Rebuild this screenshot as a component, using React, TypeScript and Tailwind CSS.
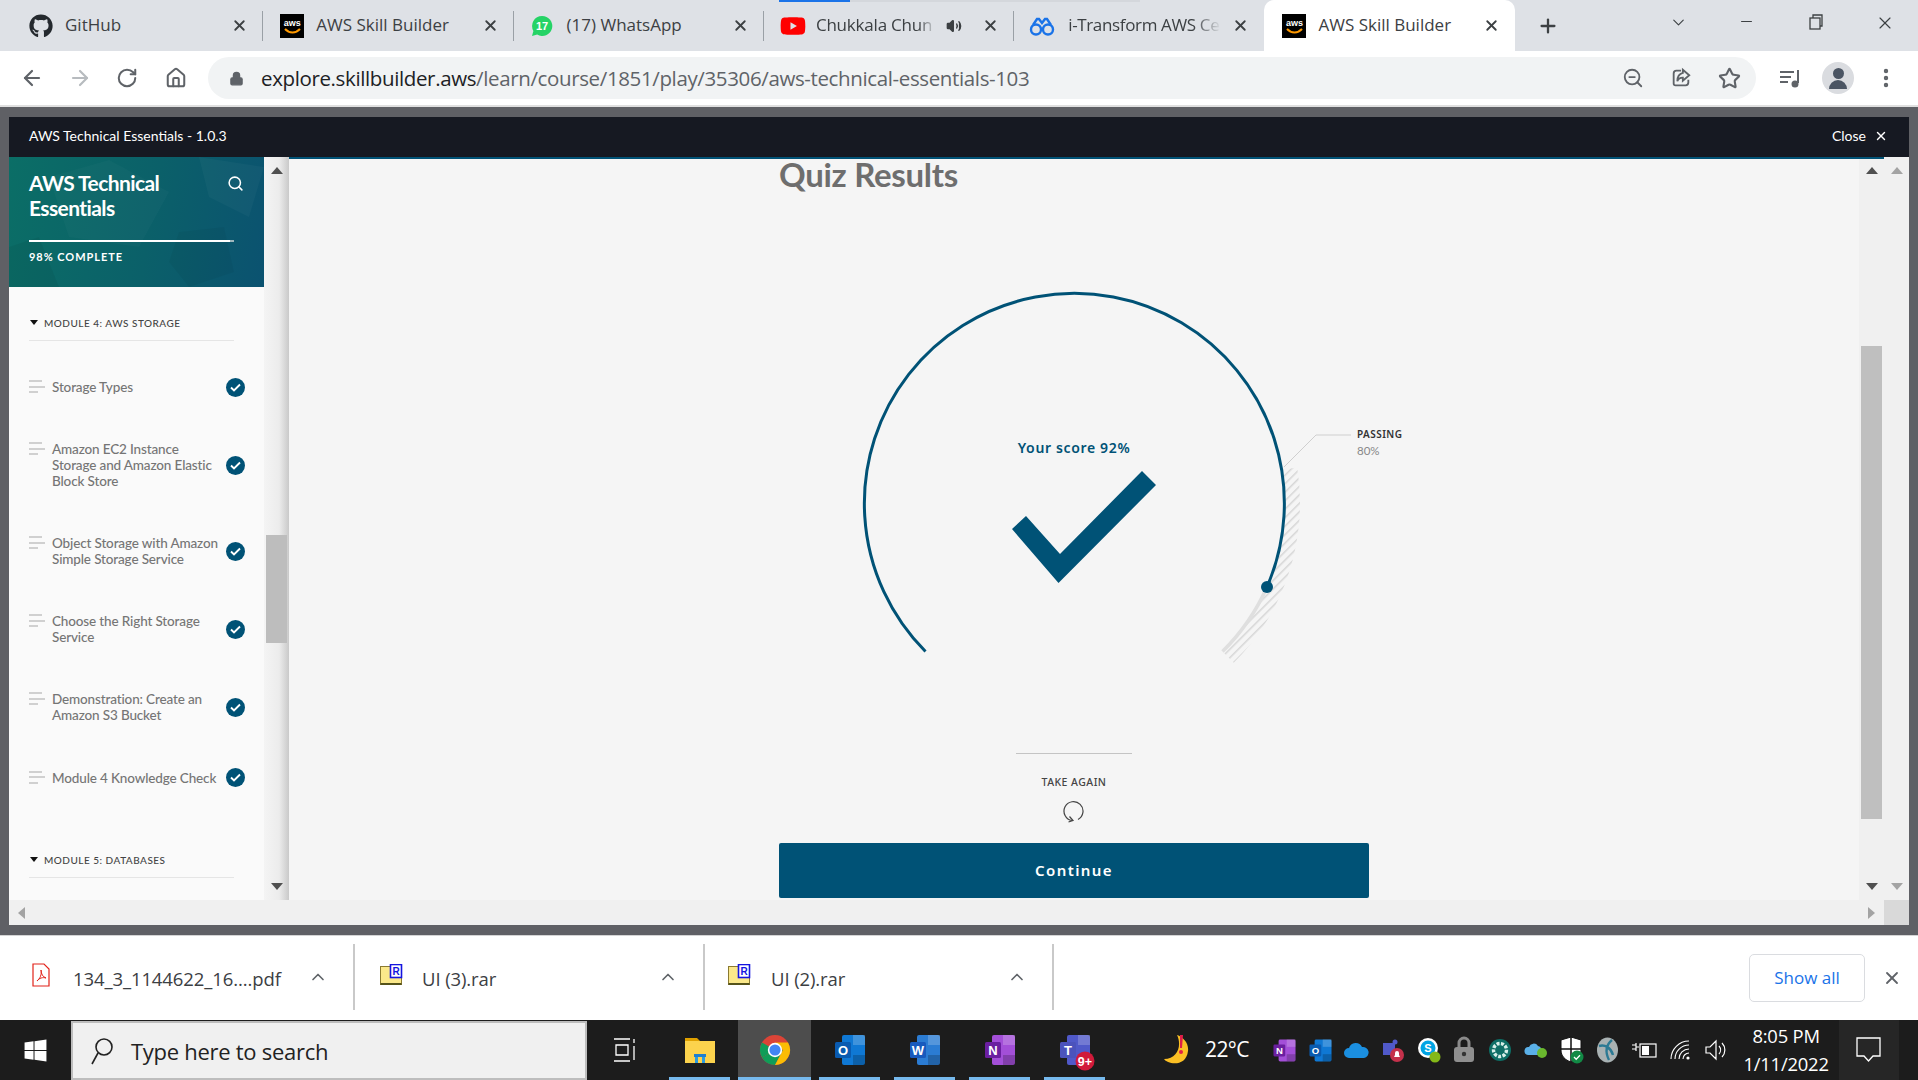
import { ArrowLeft, ArrowRight, ChevronDown, ChevronUp, Home, Lock, Minus, MoreVertical, Plus, RotateCw, Search, Star, Volume2, X, ZoomOut } from "lucide-react";
import { FaGithub, FaWindows, FaYoutube } from "react-icons/fa";
import type { ReactNode } from "react";

const uiFont = "font-['Open_Sans','Noto_Sans',sans-serif]";

function AwsIcon() {
    return (
        <span className="w-6 h-6 bg-black flex flex-col items-center justify-center shrink-0">
            <span className="text-white text-[9px] leading-[10px] font-bold font-['Liberation_Sans',sans-serif]">aws</span>
            <svg width="17" height="6" viewBox="0 0 17 6"><path d="M1 1c4 4.5 11 4.5 15 0" stroke="#f90" strokeWidth="2" fill="none" /></svg>
        </span>
    );
}

function WhatsappIcon() {
    return (
        <svg width="24" height="24" viewBox="0 0 24 24" className="shrink-0">
            <path d="M12 2a10 10 0 0 0-8.6 15L2 22l5.2-1.4A10 10 0 1 0 12 2z" fill="#25d366" />
            <text x="12" y="16" textAnchor="middle" className="font-['Liberation_Sans',sans-serif] text-[11px] font-bold fill-white">17</text>
        </svg>
    );
}

function GlassesIcon() {
    return (
        <svg width="26" height="24" viewBox="0 0 26 24" fill="none" stroke="#1a73e8" strokeWidth="2.4" className="shrink-0">
            <circle cx="7" cy="15.5" r="5" />
            <circle cx="19" cy="15.5" r="5" />
            <path d="M12 15h2M4 11l4-6h2l3 4 3-4h2l4 6" />
        </svg>
    );
}

interface tabType {
    title: string,
    icon: ReactNode,
    iconBox: string,
    fade?: boolean,
    audio?: boolean,
    active?: boolean,
}

const tabs: tabType[] = [
    {title: 'GitHub', icon: <FaGithub size={24} color="#24292e" />, iconBox: 'ml-[16px] mr-[12px]'},
    {title: 'AWS Skill Builder', icon: <AwsIcon />, iconBox: 'ml-[17px] mr-[12px]'},
    {title: '(17) WhatsApp', icon: <WhatsappIcon />, iconBox: 'ml-[16px] mr-[13px]'},
    {title: 'Chukkala Chun', icon: <FaYoutube size={26} color="#f00" />, iconBox: 'ml-[16px] mr-[10px]', fade: true, audio: true},
    {title: 'i-Transform AWS Ce', icon: <GlassesIcon />, iconBox: 'ml-[15px] mr-[13px]', fade: true},
    {title: 'AWS Skill Builder', icon: <AwsIcon />, iconBox: 'ml-[18px] mr-[12px]', active: true},
];

function TabStrip() {
    return (
        <div className="relative h-[51px] bg-[#dee1e6] flex items-stretch pl-[13px] shrink-0">
            {/* page loading bar on the youtube tab */}
            <div className="absolute left-[779px] top-0 h-[2px] w-[71px] bg-[#1a73e8]" />
            <div className="absolute left-[850px] top-0 h-[2px] w-[290px] bg-[#d4d7dc]" />
            {tabs.map((tab, i) => (
                <div key={i} className={`w-[250.3px] flex items-center relative ${tab.active ? 'bg-white rounded-t-[10px] mt-0' : ''}`}>
                    <span className={`${tab.iconBox} shrink-0 flex`}>{tab.icon}</span>
                    <span className={`${uiFont} text-[17px] -mt-[1px] text-[#3c4043] whitespace-nowrap ${tab.fade ? (tab.audio ? 'w-[120px] tracking-[-0.2px] [mask-image:linear-gradient(90deg,#000_85%,transparent)]' : 'w-[153px] tracking-[-0.35px] [mask-image:linear-gradient(90deg,#000_82%,transparent)]') : 'w-[150px]'}`}>{tab.title}</span>
                    {tab.audio && <Volume2 size={16} fill="#3c4043" color="#3c4043" className="ml-[10px]" />}
                    <X size={17} strokeWidth={2.6} color="#3c4043" className="absolute right-[15px] top-[17px]" />
                    {i < 4 && <span className="absolute right-0 top-[11px] h-[30px] w-px bg-[#9aa0a6]" />}
                </div>
            ))}
            <Plus size={22} strokeWidth={2.5} color="#3c4043" className="ml-[22px] mt-[15px]" />
            <div className="flex-1" />
            <div className="flex items-start pt-[13px] text-[#3c4043]">
                <ChevronDown size={19} strokeWidth={1.4} className="mr-[50px]" />
                <Minus size={17} strokeWidth={1.5} className="mr-[52px]" />
                <svg width="18" height="18" viewBox="0 0 18 18" fill="none" stroke="#3c4043" strokeWidth="1.3" className="mr-[50px]">
                    <rect x="3" y="5" width="10" height="11" />
                    <path d="M6 5V2h9v11h-2" />
                </svg>
                <X size={20} strokeWidth={1.4} className="mr-[23px]" />
            </div>
        </div>
    );
}

function Toolbar() {
    return (
        <div className="h-[54px] bg-white flex items-center shrink-0 border-b-0">
            <div className="w-[208px] flex items-center text-[#5f6368]">
                <ArrowLeft size={24} strokeWidth={2.2} className="ml-[20px]" />
                <ArrowRight size={24} strokeWidth={2.2} color="#b7bbbf" className="ml-[24px]" />
                <RotateCw size={22} strokeWidth={2.2} className="ml-[24px]" />
                <Home size={22} strokeWidth={2.2} className="ml-[27px]" />
            </div>
            <div className="w-[1548px] h-[42px] bg-[#f1f3f4] rounded-full flex items-center">
                <Lock size={15} fill="#5f6368" color="#5f6368" className="ml-[21px]" />
                <span className={`${uiFont} ml-[17px] text-[20.5px] tracking-[-0.37px] text-[#5f6368] whitespace-nowrap`}><span className="text-[#202124]">explore.skillbuilder.aws</span>/learn/course/1851/play/35306/aws-technical-essentials-103</span>
                <div className="flex-1" />
                <ZoomOut size={22} color="#5f6368" />
                <svg width="22" height="22" viewBox="0 0 24 24" fill="none" stroke="#5f6368" strokeWidth="2" className="ml-[26px]">
                    <path d="M12 4H7a3 3 0 0 0-3 3v11a2 2 0 0 0 2 2h11a3 3 0 0 0 3-3v-3" />
                    <path d="M14 3l7 6-7 6v-3.5c-3 0-5 1-6 4 0-5 2-8 6-9z" />
                </svg>
                <Star size={23} strokeWidth={2.2} color="#5f6368" className="ml-[26px] mr-[15px]" />
            </div>
            <svg width="24" height="24" viewBox="0 0 24 24" fill="none" stroke="#5f6368" strokeWidth="2" className="ml-[22px]">
                <path d="M2 6h14M2 11h11M2 16h8" />
                <path d="M20 4v13" />
                <circle cx="17" cy="18" r="2.5" fill="#5f6368" />
            </svg>
            <div className="ml-[20px] w-[32px] h-[32px] rounded-full bg-[#dadce0] flex flex-col items-center justify-center">
                <span className="w-[11px] h-[11px] rounded-full bg-[#4b5563]" />
                <span className="w-[18px] h-[9px] rounded-t-full bg-[#4b5563] mt-[1px]" />
            </div>
            <MoreVertical size={24} color="#5f6368" strokeWidth={2.4} className="ml-[20px]" />
        </div>
    );
}

function Tri(props: {dir: 'up' | 'down' | 'left' | 'right', color: string}) {
    const points = {up: '0,7 12,7 6,0', down: '0,0 12,0 6,7', left: '7,0 7,12 0,6', right: '0,0 0,12 7,6'}[props.dir];
    const wide = props.dir === 'up' || props.dir === 'down';
    return (
        <svg width={wide ? 12 : 7} height={wide ? 7 : 12} viewBox={wide ? "0 0 12 7" : "0 0 7 12"}>
            <polygon points={points} fill={props.color} />
        </svg>
    );
}

function CheckBadge() {
    return (
        <span className="w-[19px] h-[19px] rounded-full bg-[#005276] flex items-center justify-center shrink-0">
            <svg width="11" height="9" viewBox="0 0 11 9" fill="none" stroke="white" strokeWidth="1.9"><path d="M1 4.5l3 3 6-6" /></svg>
        </span>
    );
}

const lessons = [
    {lines: ['Storage Types'], height: 'h-[16px] mt-[38px]'},
    {lines: ['Amazon EC2 Instance', 'Storage and Amazon Elastic', 'Block Store'], height: 'mt-[46px]'},
    {lines: ['Object Storage with Amazon', 'Simple Storage Service'], height: 'mt-[46px]'},
    {lines: ['Choose the Right Storage', 'Service'], height: 'mt-[46px]'},
    {lines: ['Demonstration: Create an', 'Amazon S3 Bucket'], height: 'mt-[46px]'},
    {lines: ['Module 4 Knowledge Check'], height: 'mt-[45px]'},
];

function ModuleHeader(props: {title: string, className: string}) {
    return (
        <div className={`${props.className} ml-[20px] w-[205px] h-[24px] border-b border-[#e5e5e5] flex items-start`}>
            <span className="ml-[1px] mt-[3px]"><svg width="8" height="5" viewBox="0 0 8 5"><polygon points="0,0 8,0 4,5" fill="#111" /></svg></span>
            <span className="ml-[6px] text-[10px] leading-[12px] tracking-[0.5px] text-[#444] font-medium whitespace-nowrap">{props.title}</span>
        </div>
    );
}

function Sidebar() {
    return (
        <div className="w-[255px] h-full bg-[#fafafa] overflow-hidden font-['Lato',sans-serif] shrink-0">
            <div className="relative h-[130px] overflow-hidden bg-[linear-gradient(100deg,#0b6e66,#0b6069_55%,#0b5270)]">
                <svg width="255" height="130" viewBox="0 0 255 130" className="absolute inset-0">
                    <polygon points="40,20 100,3 160,35 130,90 60,80" fill="#fff" opacity="0.025" />
                    <polygon points="190,0 255,10 240,60 200,40" fill="#fff" opacity="0.03" />
                    <polygon points="170,75 215,70 225,115 180,130 160,105" fill="#000" opacity="0.04" />
                    <polygon points="0,90 30,80 50,130 0,130" fill="#000" opacity="0.05" />
                </svg>
                <div className="relative pl-[20px] pt-[13px] flex justify-between">
                    <h1 className="text-white font-bold text-[21px] leading-[25px] tracking-[-0.6px] w-[170px]">AWS Technical Essentials</h1>
                    <Search size={17} color="white" strokeWidth={2.2} className="mr-[20px] mt-[5px]" />
                </div>
                <div className="relative ml-[20px] mt-[20px] w-[205px] h-[2px] bg-[#9fb7bd]"><div className="w-[98%] h-full bg-white" /></div>
                <p className="relative ml-[20px] mt-[9px] text-white font-bold text-[11px] leading-[12px] tracking-[0.95px]">98% COMPLETE</p>
            </div>
            <ModuleHeader title="MODULE 4: AWS STORAGE" className="mt-[30px]" />
            {lessons.map((lesson, i) => (
                <div key={i} className={`${lesson.height} flex items-center pl-[20px]`}>
                    <div className="flex-1 flex items-start">
                        <span className="w-[16px] mt-[1px] flex flex-col gap-[3.5px] shrink-0">
                            <span className="block h-[2px] w-[13px] bg-[#d0d0d0]" />
                            <span className="block h-[2px] w-[16px] bg-[#d0d0d0]" />
                            <span className="block h-[2px] w-[9px] bg-[#d0d0d0]" />
                        </span>
                        <p className="ml-[7px] text-[13.5px] leading-[16px] tracking-[-0.14px] text-[#757575] font-medium whitespace-nowrap">
                            {lesson.lines.map(line => <span key={line} className="block">{line}</span>)}
                        </p>
                    </div>
                    <span className="mr-[19px]"><CheckBadge /></span>
                </div>
            ))}
            <ModuleHeader title="MODULE 5: DATABASES" className="mt-[67px]" />
        </div>
    );
}

function SidebarScroll() {
    return (
        <div className="relative w-[25px] h-full shrink-0 bg-[linear-gradient(90deg,#f4f4f4,#ececec_60%,#c9c9c9)] flex flex-col items-center">
            <span className="mt-[10px]"><Tri dir="up" color="#505050" /></span>
            <div className="mt-[361px] w-[21px] h-[108px] bg-[#bdbdbd]" />
            <div className="flex-1" />
            <span className="mb-[10px]"><Tri dir="down" color="#505050" /></span>
        </div>
    );
}

function Gauge() {
    return (
        <svg width="700" height="400" viewBox="0 0 700 400" className="-mx-[55px] mt-[87px] block shrink-0">
            <defs>
                <pattern id="hatch" width="6" height="6" patternUnits="userSpaceOnUse" patternTransform="rotate(-45)">
                    <rect x="0" y="0" width="6" height="1.5" fill="#d6d6d6" />
                </pattern>
            </defs>
            <path d="M557.4 190.1A210 210 0 0 1 498.5 371.5L509.8 382.8A226 226 0 0 0 573.2 187.6Z" fill="url(#hatch)" />
            <path d="M543 307A210 210 0 0 1 498.5 371.5" fill="none" stroke="#dfdfdf" strokeWidth="3.5" />
            <path d="M201.5 371.5A210 210 0 1 1 543 307" fill="none" stroke="#005276" strokeWidth="3" />
            <circle cx="543" cy="307" r="6" fill="#005276" />
            <polygon points="288,249 302,236 336,274 418,191 432,205 334.5,303" fill="#005276" />
            <path d="M560 187L592 155H627" fill="none" stroke="#cfcfcf" strokeWidth="1" />
            <text x="633" y="158" className="font-['Noto_Sans',sans-serif] text-[10px] font-semibold tracking-[0.45px] fill-[#333]">PASSING</text>
            <text x="633" y="175" className="font-['Lato',sans-serif] text-[11.5px] fill-[#888]">80%</text>
            <text x="350" y="173" textAnchor="middle" className="font-['Noto_Sans',sans-serif] text-[14px] font-semibold tracking-[0.65px] fill-[#005276]">Your score 92%</text>
        </svg>
    );
}

function Results() {
    return (
        <div className="flex-1 h-full bg-[#f5f5f5] flex flex-col items-center">
            <div className="w-[590px] flex flex-col items-center">
                <h2 className="w-full h-[36px] text-[33px] leading-[34px] font-bold text-[#6e6e6e] font-['Lato',sans-serif] tracking-[-0.3px]">Quiz Results</h2>
                <Gauge />
                <div className="mt-[73px] w-[116px] h-px bg-[#c4c4c4]" />
                <p className="mt-[21px] text-[10.5px] leading-[14px] font-medium tracking-[0.45px] text-[#444] font-['Noto_Sans',sans-serif]">TAKE AGAIN</p>
                <svg width="22" height="24" viewBox="0 0 22 24" fill="none" stroke="#444" strokeWidth="1.2" className="mt-[10px]">
                    <path d="M9 21.5A9.5 9.5 0 1 1 15 20.5" />
                    <path d="M6.5 17.5l3.5 4-4.5 1.5" />
                </svg>
                <button className="mt-[20px] w-full h-[55px] bg-[#005276] rounded-[2px] text-white text-[15px] font-semibold tracking-[1.4px] font-['Noto_Sans',sans-serif]">Continue</button>
            </div>
        </div>
    );
}

function RightScrolls() {
    return (
        <>
            <div className="w-[25px] h-full bg-[#f0f0f0] flex flex-col items-center shrink-0">
                <span className="mt-[10px]"><Tri dir="up" color="#505050" /></span>
                <div className="mt-[172px] w-[21px] h-[473px] bg-[#bfbfbf]" />
                <div className="flex-1" />
                <span className="mb-[10px]"><Tri dir="down" color="#505050" /></span>
            </div>
            <div className="w-[25px] h-full bg-[#f0f0f0] flex flex-col items-center justify-between shrink-0">
                <span className="mt-[10px]"><Tri dir="up" color="#a3a3a3" /></span>
                <span className="mb-[10px]"><Tri dir="down" color="#a3a3a3" /></span>
            </div>
        </>
    );
}

function Modal() {
    return (
        <div className="h-[828px] bg-[#5f6065] px-[9px] py-[10px] shrink-0">
            <div className="h-[808px] flex flex-col">
                <div className="h-[40px] pb-[3px] bg-[#161922] flex items-center justify-between text-white font-['Lato',sans-serif] text-[14px] shrink-0">
                    <span className="ml-[20px]">AWS Technical Essentials - 1.0.3</span>
                    <span className="flex items-center mr-[21px]">Close<X size={14} strokeWidth={2.4} className="ml-[8px]" /></span>
                </div>
                <div className="h-[743px] flex shrink-0 relative">
                    <Sidebar />
                    <SidebarScroll />
                    <Results />
                    <RightScrolls />
                    <div className="absolute left-[280px] right-[25px] top-0 h-[2px] bg-[#005276]" />
                </div>
                <div className="h-[25px] bg-[#f0f0f0] flex items-center justify-between shrink-0">
                    <span className="ml-[9px] flex"><Tri dir="left" color="#a3a3a3" /></span>
                    <div className="flex items-center h-full">
                        <Tri dir="right" color="#a3a3a3" />
                        <div className="ml-[9px] w-[25px] h-full bg-[#d9d9d9]" />
                    </div>
                </div>
            </div>
        </div>
    );
}

function PdfIcon() {
    return (
        <svg width="18" height="24" viewBox="0 0 18 24" fill="#fff" stroke="#e2231a" strokeWidth="1.2">
            <path d="M1 1h11l5 5v17H1z" />
            <path d="M5 18c3-2 5-7 4-11 0 4 2 7 5 8-3-1-7 0-9 3z" fill="none" strokeWidth="1" />
        </svg>
    );
}

function RarIcon() {
    return (
        <svg width="23" height="22" viewBox="0 0 23 22">
            <rect x="0.5" y="2.5" width="21" height="18" fill="#fbe88a" stroke="#8a7a30" />
            <rect x="0.5" y="19" width="21" height="2" fill="#55531a" />
            <rect x="10.5" y="0.5" width="11" height="13" fill="#fff" stroke="#1414e0" strokeWidth="1.6" />
            <text x="16" y="11" textAnchor="middle" className="font-['Liberation_Sans',sans-serif] text-[10px] font-bold fill-[#1414e0]">R</text>
        </svg>
    );
}

const downloads = [
    {name: '134_3_1144622_16....pdf', icon: <PdfIcon />, width: 'w-[355px]', pad: 'pl-[32px]', gap: 'ml-[23px]'},
    {name: 'UI (3).rar', icon: <RarIcon />, width: 'w-[350px]', pad: 'pl-[25px]', gap: 'ml-[19px]'},
    {name: 'UI (2).rar', icon: <RarIcon />, width: 'w-[349px]', pad: 'pl-[23px]', gap: 'ml-[20px]'},
];

function DownloadBar() {
    return (
        <div className="h-[85px] bg-white flex items-center border-t border-[#d4d4d4] shrink-0">
            {downloads.map(item => (
                <div key={item.name} className={`${item.width} ${item.pad} h-[66px] flex items-center relative border-r-2 border-[#c9c9c9] -mt-[2px]`}>
                    <span className="flex -mt-[4px]">{item.icon}</span>
                    <span className={`${item.gap} ${uiFont} text-[18.5px] mt-[4px] text-[#3c4043] whitespace-nowrap tracking-[-0.1px]`}>{item.name}</span>
                    <ChevronUp size={20} color="#5f6368" strokeWidth={2} className="absolute right-[25px] top-[23px]" />
                </div>
            ))}
            <div className="flex-1" />
            <button className={`${uiFont} w-[116px] h-[48px] border border-[#dadce0] rounded-[5px] text-[#1a73e8] text-[17px] font-medium -mt-[1px]`}>Show all</button>
            <X size={20} color="#5f6368" strokeWidth={2.2} className="ml-[17px] mr-[16px]" />
        </div>
    );
}

function Office(props: {letter: string, back: string, front: string, size?: number, badge?: ReactNode}) {
    const s = props.size ?? 34;
    return (
        <svg width={s} height={s} viewBox="0 0 34 34" className="overflow-visible">
            <rect x="9" y="2" width="23" height="30" rx="2" fill={props.back} />
            <rect x="20" y="2" width="12" height="10" fill="#fff" opacity="0.2" />
            <rect x="20" y="22" width="12" height="10" fill="#000" opacity="0.2" />
            <rect x="2" y="9" width="16" height="16" rx="1.5" fill={props.front} />
            <text x="10" y="22" textAnchor="middle" className="font-['Liberation_Sans',sans-serif] text-[13px] font-bold fill-white">{props.letter}</text>
            {props.badge}
        </svg>
    );
}

function Chrome() {
    return (
        <svg width="32" height="32" viewBox="0 0 32 32">
            <circle cx="16" cy="16" r="15" fill="#db4437" />
            <path d="M16 16L3 23.5A15 15 0 0 1 3 8.5z" fill="#0f9d58" />
            <path d="M3 23.5A15 15 0 0 0 16 31L24 16H16z" fill="#0f9d58" />
            <path d="M16 31A15 15 0 0 0 29 8.5H16l8 7.5z" fill="#fbbc04" />
            <circle cx="16" cy="16" r="7.2" fill="#fff" />
            <circle cx="16" cy="16" r="5.6" fill="#4285f4" />
        </svg>
    );
}

function Folder() {
    return (
        <svg width="32" height="32" viewBox="0 0 32 32">
            <path d="M1 4h12l3 3H1z" fill="#e0a100" />
            <rect x="1" y="7" width="30" height="22" fill="#fcd34d" />
            <rect x="10" y="20" width="12" height="3" fill="#1e7fd0" />
            <path d="M11 23h3v6h-3zM18 23h3v6h-3z" fill="#2b9be0" />
        </svg>
    );
}

const teamsBadge = (
    <g>
        <circle cx="27" cy="28" r="9.5" fill="#d11a3a" />
        <text x="27" y="32.5" textAnchor="middle" className="font-['Liberation_Sans',sans-serif] text-[12.5px] font-bold fill-white">9+</text>
    </g>
);

const apps = [
    {icon: <Folder />},
    {icon: <Chrome />, active: true},
    {icon: <Office letter="O" back="#0f78d4" front="#0a5bb0" />},
    {icon: <Office letter="W" back="#2b7cd3" front="#185abd" />},
    {icon: <Office letter="N" back="#a34fd8" front="#6b1fa0" />},
    {icon: <Office letter="T" back="#5059c9" front="#4b53bc" badge={teamsBadge} />},
];

const trayIcons: ReactNode[] = [
    <Office letter="N" back="#a34fd8" front="#6b1fa0" size={25} />,
    <Office letter="O" back="#0f78d4" front="#0a5bb0" size={25} />,
    <svg width="25" height="18" viewBox="0 0 25 18"><path d="M5 17a5 5 0 0 1 0-10 7 7 0 0 1 13-1 5.5 5.5 0 0 1 2 11z" fill="#1b8fe0" /></svg>,
    <svg width="26" height="26" viewBox="0 0 26 26"><rect x="3" y="6" width="12" height="12" fill="#5059c9" /><circle cx="15" cy="5" r="2.5" fill="#5059c9" /><circle cx="17" cy="18" r="7" fill="#c4314b" /><path d="M14 20h6l-1-2v-2a2 2 0 0 0-4 0v2z" fill="#fff" /></svg>,
    <svg width="24" height="26" viewBox="0 0 24 26"><circle cx="11" cy="11" r="10" fill="#fff" /><circle cx="11" cy="11" r="7.5" fill="#00a4e4" /><text x="11" y="15" textAnchor="middle" className="font-['Liberation_Sans',sans-serif] text-[11px] font-bold fill-white">S</text><circle cx="18" cy="20" r="5.5" fill="#84b818" /></svg>,
    <svg width="24" height="28" viewBox="0 0 24 28" fill="none"><path d="M7 12V7a5 5 0 0 1 10 0v5" stroke="#8a8a8a" strokeWidth="3" /><rect x="2" y="11" width="20" height="15" rx="3" fill="#8f8f8f" /><circle cx="12" cy="18" r="2.2" fill="#333" /></svg>,
    <svg width="24" height="24" viewBox="0 0 24 24"><circle cx="12" cy="12" r="11" fill="#0e6e66" /><circle cx="12" cy="12" r="6.5" fill="none" stroke="#d8efe9" strokeWidth="3.4" strokeDasharray="3 1.4" /></svg>,
    <svg width="24" height="18" viewBox="0 0 24 18"><path d="M4 14a4 4 0 0 1 1-8 5 5 0 0 1 9-1 4 4 0 0 1 3 6v3z" fill="#5ab0e8" /><circle cx="18" cy="12" r="5" fill="#6ab82e" /></svg>,
    <svg width="24" height="28" viewBox="0 0 24 28"><path d="M11 1l10 3v10c0 6-4 10-10 12C5 24 1 20 1 14V4z" fill="#fff" stroke="#111" /><path d="M11 1v25M1 13h20" stroke="#111" strokeWidth="1.5" /><circle cx="17" cy="21" r="6.5" fill="#128a45" /><path d="M14 21l2.2 2.2 3.8-4" stroke="#fff" strokeWidth="1.3" fill="none" /></svg>,
    <svg width="23" height="26" viewBox="0 0 23 26"><ellipse cx="11.5" cy="13" rx="10.5" ry="12.5" fill="#a9b2b3" /><path d="M3 9c6-2 12 2 14 9M16 3C10 8 9 15 13 23" stroke="#2c7a94" strokeWidth="2.4" fill="none" /></svg>,
    <svg width="26" height="20" viewBox="0 0 26 20" fill="none" stroke="#fff" strokeWidth="1.2"><path d="M1 5h4M1 9h4M5 3v8M5 7h3" /><rect x="9" y="4" width="16" height="13" /><rect x="11" y="6" width="7" height="9" fill="#fff" stroke="none" /></svg>,
    <svg width="22" height="22" viewBox="0 0 22 22" fill="none" stroke="#fff" strokeWidth="1.1"><path d="M2 20A18 18 0 0 1 20 2M6 20A14 14 0 0 1 20 6M10 20a10 10 0 0 1 10-10M14 20a6 6 0 0 1 6-6" /><circle cx="19" cy="19" r="1.6" fill="#fff" stroke="none" /></svg>,
    <svg width="24" height="24" viewBox="0 0 24 24" fill="none" stroke="#fff" strokeWidth="1.2"><path d="M2 9v6h4l6 6V3L6 9zM15 8a6 6 0 0 1 0 8M18 5a10 10 0 0 1 0 14" /></svg>,
];

function Taskbar() {
    return (
        <div className="h-[60px] bg-[#1c1c1c] flex items-stretch shrink-0">
            <div className="w-[71px] flex items-center justify-center"><FaWindows size={25} color="white" /></div>
            <div className="w-[516px] mt-[1px] bg-[#f0f0f0] border-2 border-[#bdbdbd] flex items-center">
                <svg width="26" height="30" viewBox="0 0 26 30" fill="none" stroke="#222" strokeWidth="1.6" className="ml-[16px]">
                    <circle cx="15" cy="11" r="8" />
                    <path d="M9 17L3 28" />
                </svg>
                <span className={`${uiFont} ml-[16px] mt-[2px] text-[22px] text-[#222] tracking-[-0.28px]`}>Type here to search</span>
            </div>
            <div className="w-[75px] flex items-center justify-center">
                <svg width="24" height="26" viewBox="0 0 24 26" fill="none" stroke="#fff" strokeWidth="1.3">
                    <path d="M1 2h16M1 24h16M3 8h12v10H3zM21 2v4M21 9v14" />
                </svg>
            </div>
            {apps.map((app, i) => (
                <div key={i} className="relative w-[75px] flex items-center justify-center">
                    {app.active && <div className="absolute inset-y-0 inset-x-[1px] bg-[#4d4d4d]" />}
                    <span className="relative flex">{app.icon}</span>
                    <div className={`absolute bottom-0 h-[3px] bg-[#76b9ed] ${app.active ? 'inset-x-[1px]' : 'inset-x-[7px]'}`} />
                </div>
            ))}
            <div className="w-[46px]" />
            <svg width="32" height="34" viewBox="0 0 32 34" className="self-center">
                <path d="M19 2c5 10 1 24-13 24 3 5 22 9 24-8C31 10 25 4 19 2z" fill="#fbbf24" />
                <path d="M22 2l3 0-1 13-2 0z" fill="#e11d48" />
                <circle cx="23" cy="19" r="2" fill="#e11d48" />
            </svg>
            <span className={`${uiFont} self-center ml-[15px] text-[21px] text-white tracking-[-0.6px] w-[62px]`}>22°C</span>
            <div className="flex items-center">
                {trayIcons.map((icon, i) => (
                    <span key={i} className="w-[35.9px] flex items-center justify-center">{icon}</span>
                ))}
            </div>
            <div className={`w-[105px] ${uiFont} text-white text-[18.4px] flex flex-col items-center justify-center leading-[28px] tracking-[-0.2px]`}>
                <span>8:05 PM</span>
                <span>1/11/2022</span>
            </div>
            <div className="w-[60px] bg-[#262626] flex items-center justify-center">
                <svg width="25" height="26" viewBox="0 0 25 26" fill="none" stroke="#fff" strokeWidth="1.3"><path d="M1 1h23v18h-7l-4.5 5-4.5-5H1z" /></svg>
            </div>
            <div className="flex-1" />
        </div>
    );
}

export default function App() {
    return (
        <div className="w-[1918px] h-[1080px] overflow-hidden flex flex-col bg-white">
            <TabStrip />
            <Toolbar />
            <div className="h-[2px] bg-[#e0e0e0] shrink-0" />
            <Modal />
            <DownloadBar />
            <Taskbar />
        </div>
    );
}
